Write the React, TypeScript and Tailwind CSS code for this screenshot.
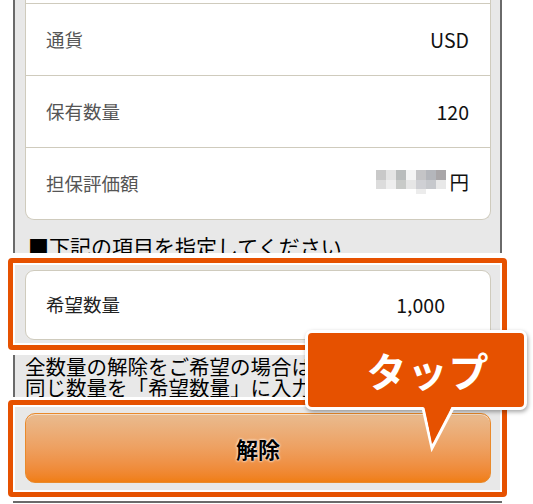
import React from "react";

const font = { fontFamily: '"Noto Sans CJK JP", "Noto Sans", sans-serif' };

function Row({ label, value }: { label: string; value: React.ReactNode }) {
  return (
    <div className="flex h-[72px] items-center justify-between border-t border-[#cfcbbd] pl-[20px] pr-[21px]">
      <span className="text-[18.5px] text-[#555]">{label}</span>
      <span className="text-[19.5px] text-[#111]">{value}</span>
    </div>
  );
}

function Masked() {
  const cols = ["#c9c9c9", "#e4e4e4", "#b9bcbc", "#f4f4f4", "#c4c4c6", "#b4b6bb", "#a9a6a8"];
  const cols2 = ["#dcdcdc", "#eeeeee", "#c8cac8", "#e6e6e6", "#cfd0d4", "#c6c8cc", "#e8e8e8"];
  return (
    <span className="inline-flex items-center">
      <svg width="72" height="26" viewBox="0 0 72 26" className="mr-[1px]">
        {cols.map((c, i) => (
          <rect key={"a" + i} x={i * 10} y={2} width={10} height={10} fill={c} />
        ))}
        {cols2.map((c, i) => (
          <rect key={"b" + i} x={i * 10} y={12} width={10} height={9} fill={c} />
        ))}
        <rect x={40} y={21} width={10} height={5} fill="#ececec" />
      </svg>
      <span>円</span>
    </span>
  );
}

export default function App() {
  return (
    <div className="relative h-[504px] w-[533px] overflow-hidden bg-white" style={font}>
      {/* Panel part A */}
      <div className="ml-[13px] h-[253px] w-[489px] overflow-hidden border-x-2 border-[#6a6a6a] bg-[#e8e8e8] pl-[10px] pr-[9px]">
        <div className="rounded-b-[9px] border-x border-b border-[#cfcbbd] bg-white">
          <div className="h-[3px]" />
          <Row label="通貨" value="USD" />
          <Row label="保有数量" value="120" />
          <Row label="担保評価額" value={<Masked />} />
        </div>
        <div className="mt-[13px] pl-[3px] text-[21px] leading-[26px] text-black">■下記の項目を指定してください</div>
      </div>

      {/* Highlight box 1 */}
      <div className="ml-[8px] mt-[5px] w-[499px] rounded-[4px] border-[5px] border-[#e65100] bg-white p-[2px]">
        <div className="h-[78px] bg-[#e8e8e8] pl-[10px] pr-[9px] pt-[5px]">
          <div className="flex h-[70px] items-center justify-between rounded-[9px] border border-[#cfcbbd] bg-white pl-[20px] pr-[45px]">
            <span className="text-[18.5px] text-[#222]">希望数量</span>
            <span className="text-[19.5px] text-[#111]">1,000</span>
          </div>
        </div>
      </div>

      {/* Note */}
      <div className="ml-[13px] mt-[5px] h-[42px] w-[489px] overflow-hidden border-x-2 border-[#6a6a6a] bg-[#e8e8e8] pl-[10px] pt-[1px] text-[20.5px] leading-[21px] text-black">
        <div>全数量の解除をご希望の場合は、保有数量と</div>
        <div>同じ数量を「希望数量」に入力してください。</div>
      </div>

      {/* Highlight box 2 */}
      <div className="ml-[8px] mt-[3px] w-[499px] rounded-[4px] border-[5px] border-[#e65100] bg-white p-[2px]">
        <div className="h-[83px] bg-[#e8e8e8] pl-[10px] pr-[9px] pt-[6px]">
          <div className="flex h-[70px] items-center justify-center rounded-[10px] border border-[#e98a2c] bg-gradient-to-b from-[#e9bb8f] via-[#eea060] to-[#f07e12] shadow-[inset_0_1px_0_rgba(255,255,255,0.5)]">
            <span className="text-[22px] font-bold text-black [text-shadow:0_0_3px_#fff,0_0_2px_#fff]">解除</span>
          </div>
        </div>
      </div>

      {/* bottom line */}
      <div className="ml-[13px] mt-[4px] h-[2px] w-[489px] bg-[#6a6a6a]" />

      {/* Tooltip */}
      <div className="absolute left-[305px] top-[330px] flex h-[80px] w-[222px] items-center justify-center rounded-[7px] border-[3px] border-white bg-[#e65100] pl-[24px] shadow-[1px_2px_4px_rgba(0,0,0,0.35)]">
        <span className="text-[40px] font-bold leading-none tracking-[1px] text-white">タップ</span>
      </div>
      <svg className="absolute left-[415px] top-[400px]" width="46" height="52" viewBox="0 0 46 52">
        <polygon points="8,4 38,4 17,48" fill="#e65100" />
        <polyline points="8,8 17,48 38,8" fill="none" stroke="#fff" strokeWidth="3" strokeLinejoin="miter" />
        <polygon points="9.5,4 36,4 17,44" fill="#e65100" />
      </svg>
    </div>
  );
}
